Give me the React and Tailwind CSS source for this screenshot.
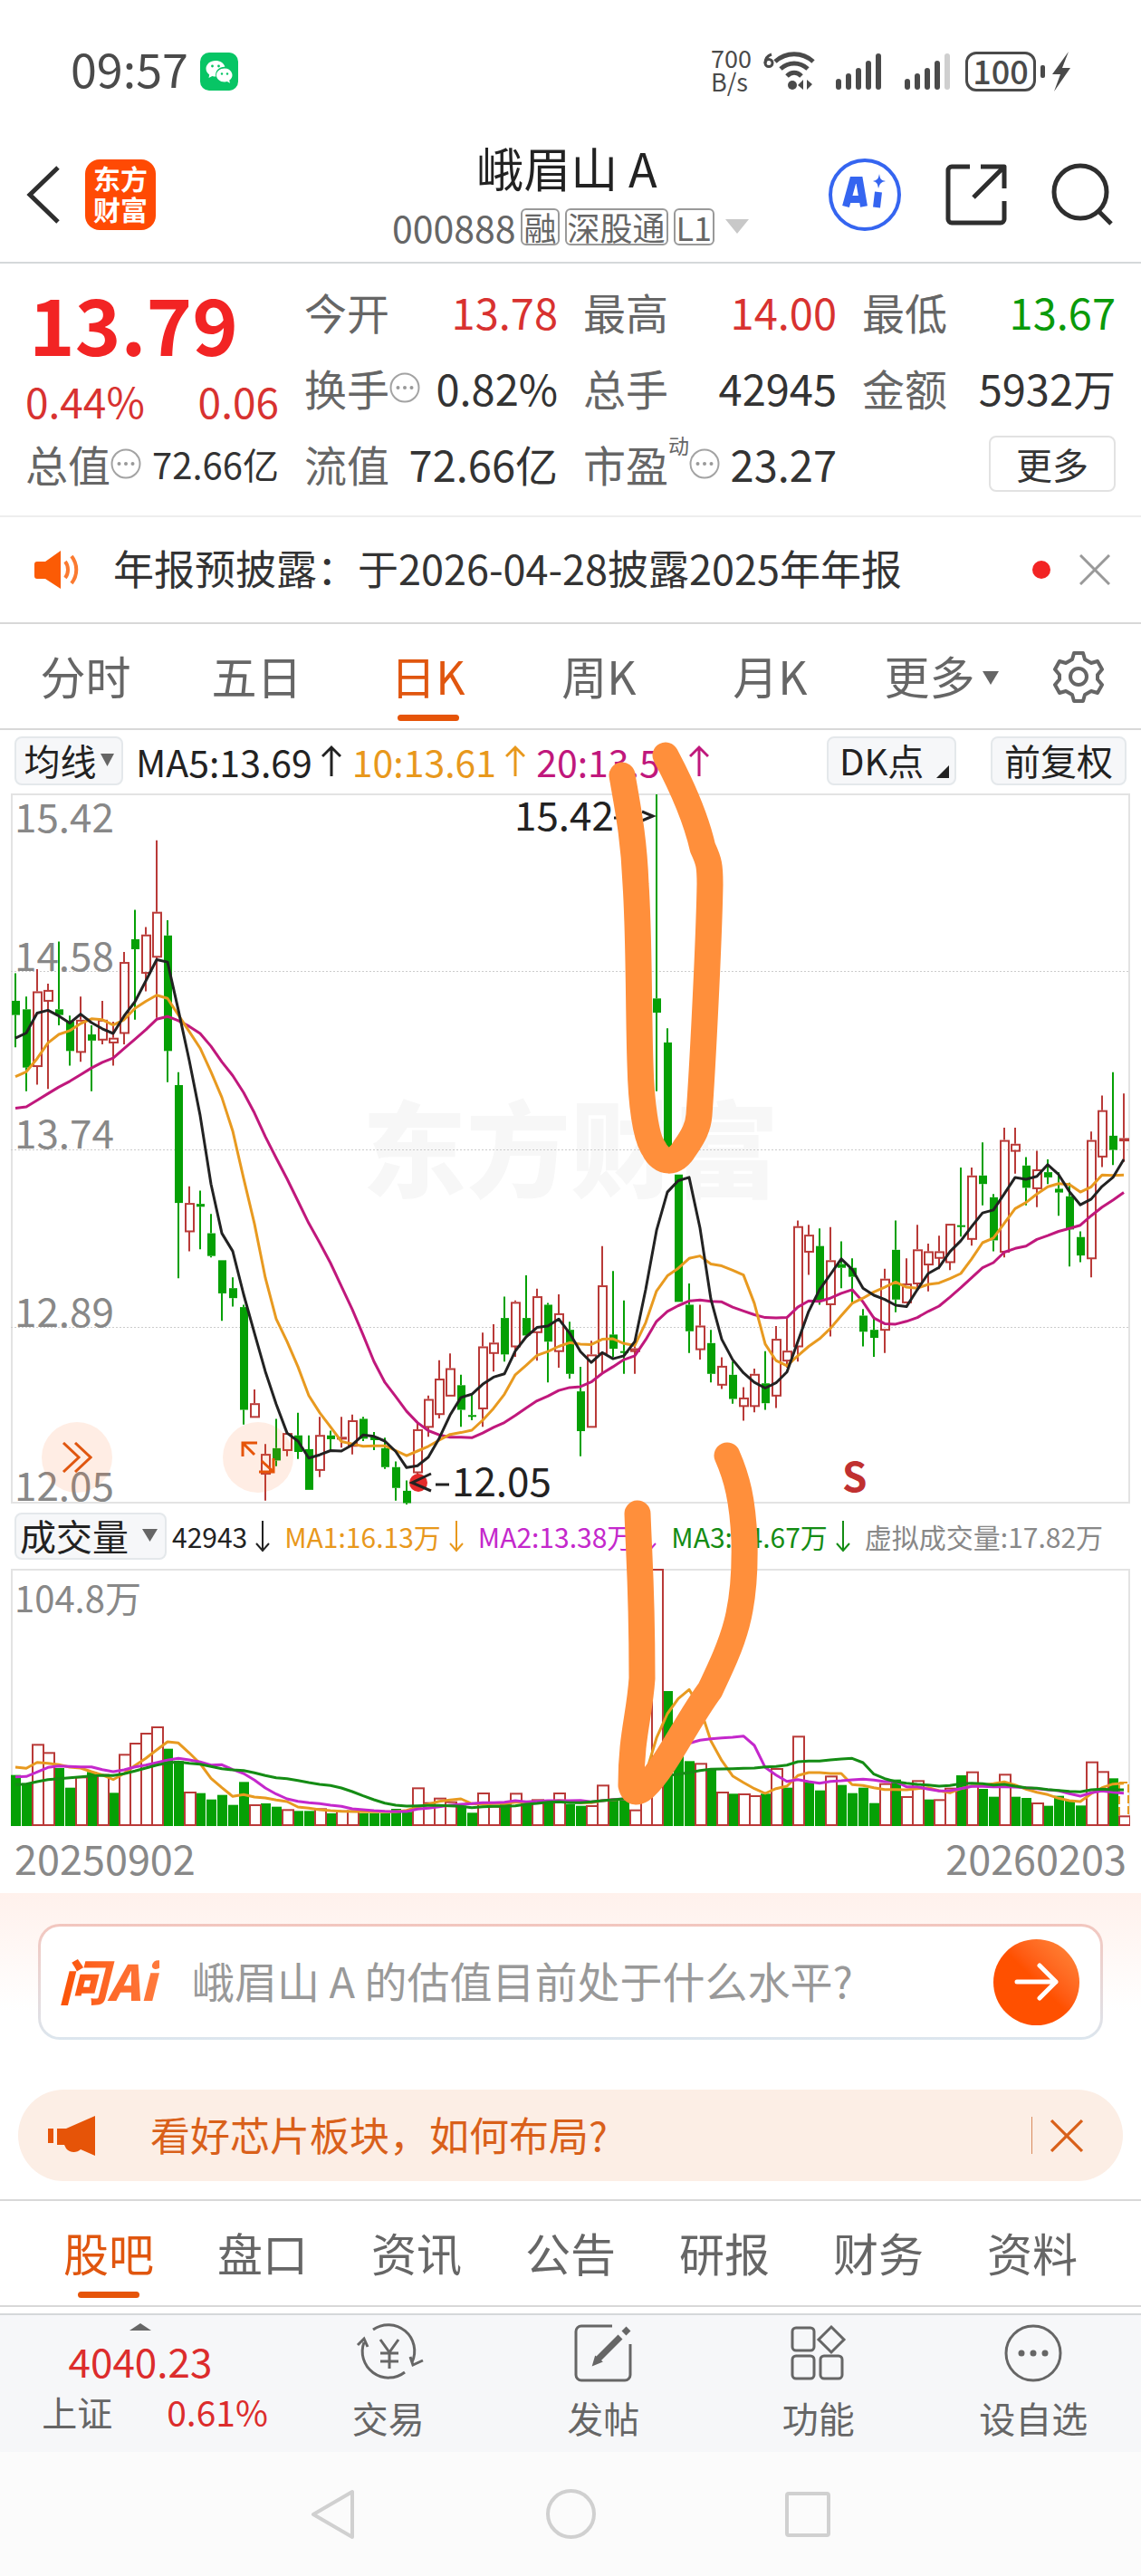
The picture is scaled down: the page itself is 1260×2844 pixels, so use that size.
import React from 'react';

const UP = '#b93a38';
const DOWN = '#05a005';

// [direction, body top, body bottom, wick top, wick bottom], levels run from 32 (top) to 1532 (bottom)
const candles = [
  ['d', 470, 500, 412, 568], ['d', 488, 611, 461, 661], ['u', 450, 608, 403, 647], ['u', 447, 470, 434, 656],
  ['d', 488, 500, 345, 522], ['d', 514, 576, 501, 607], ['u', 510, 578, 461, 599], ['d', 541, 554, 522, 661],
  ['u', 510, 552, 470, 562], ['u', 548, 558, 514, 607], ['u', 388, 538, 367, 562], ['d', 340, 361, 278, 510],
  ['u', 330, 411, 314, 450], ['u', 282, 377, 131, 506], ['d', 332, 576, 300, 642], ['d', 648, 897, 621, 1056],
  ['u', 897, 957, 862, 999], ['d', 899, 905, 871, 995], ['d', 961, 1009, 920, 1012], ['d', 1018, 1088, 1018, 1146],
  ['d', 1077, 1098, 1054, 1116], ['d', 1117, 1334, 1112, 1365], ['u', 1320, 1349, 1291, 1349], ['u', 1427, 1469, 1406, 1526],
  ['d', 1415, 1441, 1353, 1453], ['u', 1383, 1419, 1383, 1432], ['d', 1388, 1423, 1340, 1438], ['d', 1417, 1503, 1388, 1503],
  ['u', 1387, 1461, 1349, 1476], ['d', 1388, 1396, 1378, 1419], ['u', 1391, 1395, 1349, 1414], ['u', 1356, 1410, 1344, 1428],
  ['d', 1353, 1395, 1349, 1400], ['d', 1391, 1398, 1381, 1419], ['d', 1415, 1455, 1393, 1459], ['d', 1455, 1499, 1443, 1526],
  ['d', 1505, 1531, 1483, 1534], ['u', 1375, 1466, 1360, 1480], ['u', 1311, 1370, 1304, 1391], ['u', 1268, 1343, 1229, 1352],
  ['u', 1246, 1304, 1215, 1304], ['d', 1282, 1334, 1260, 1370], ['d', 1345, 1348, 1300, 1356], ['u', 1200, 1331, 1171, 1370],
  ['u', 1192, 1214, 1153, 1253], ['d', 1140, 1217, 1095, 1232], ['u', 1106, 1200, 1103, 1222], ['d', 1140, 1177, 1050, 1177],
  ['u', 1094, 1170, 1078, 1230], ['d', 1112, 1190, 1108, 1276], ['u', 1130, 1210, 1090, 1245], ['d', 1165, 1258, 1148, 1268],
  ['d', 1295, 1379, 1243, 1432], ['u', 1217, 1370, 1188, 1370], ['u', 1071, 1215, 988, 1255], ['d', 1175, 1205, 1041, 1222],
  ['d', 1210, 1213, 1103, 1258], ['u', 1204, 1210, 1185, 1258], ['u', 480, 740, 480, 740], ['d', 465, 495, 34, 661],
  ['d', 558, 790, 528, 790], ['d', 837, 1106, 837, 1106], ['d', 1112, 1168, 1067, 1214], ['u', 1156, 1206, 1112, 1228],
  ['d', 1193, 1258, 1165, 1276], ['u', 1241, 1281, 1223, 1290], ['d', 1260, 1311, 1232, 1321], ['u', 1308, 1326, 1286, 1357],
  ['u', 1258, 1326, 1247, 1339], ['d', 1278, 1320, 1210, 1334], ['u', 1184, 1304, 1157, 1330], ['u', 1209, 1230, 1137, 1245],
  ['u', 946, 1200, 934, 1232], ['u', 964, 1000, 943, 1049], ['d', 988, 1105, 951, 1112], ['u', 1018, 1111, 948, 1179],
  ['d', 1026, 1034, 978, 1077], ['d', 1034, 1053, 1014, 1108], ['d', 1135, 1169, 1121, 1200], ['d', 1165, 1182, 1137, 1222],
  ['u', 1057, 1165, 1036, 1214], ['d', 996, 1101, 934, 1128], ['u', 1067, 1107, 1014, 1107], ['u', 995, 1067, 943, 1075],
  ['u', 999, 1027, 983, 1084], ['u', 999, 1013, 966, 1037], ['u', 941, 1022, 941, 1039], ['d', 944, 947, 822, 968],
  ['u', 839, 973, 822, 987], ['d', 839, 857, 769, 902], ['d', 885, 976, 878, 999], ['u', 764, 1000, 738, 1012],
  ['u', 772, 787, 738, 835], ['d', 818, 865, 800, 902], ['u', 826, 866, 787, 906], ['d', 832, 843, 805, 857],
  ['d', 867, 875, 832, 924], ['d', 883, 953, 854, 1031], ['d', 969, 1008, 957, 1022], ['u', 764, 1014, 746, 1054],
  ['u', 701, 799, 670, 821], ['d', 755, 785, 621, 817], ['u', 760, 765, 666, 810],
];

const ma5 = [549, 538, 496, 490, 502, 517, 498, 516, 529, 539, 502, 472, 428, 383, 388, 490, 596, 712, 857, 961, 999, 1090, 1172, 1253, 1322, 1383, 1400, 1436, 1429, 1420, 1421, 1408, 1387, 1390, 1400, 1422, 1456, 1452, 1434, 1394, 1345, 1308, 1301, 1280, 1265, 1258, 1210, 1180, 1160, 1157, 1142, 1172, 1211, 1234, 1213, 1226, 1220, 1190, 1080, 955, 874, 850, 843, 950, 1100, 1185, 1228, 1256, 1276, 1288, 1277, 1254, 1190, 1126, 1080, 1048, 1015, 1037, 1077, 1092, 1101, 1113, 1116, 1080, 1046, 1033, 1000, 977, 947, 918, 912, 878, 843, 847, 841, 816, 837, 873, 901, 889, 862, 843, 805];
const ma10 = [630, 620, 592, 559, 541, 533, 518, 508, 510, 521, 510, 486, 471, 458, 465, 500, 535, 570, 620, 674, 745, 845, 941, 1055, 1142, 1190, 1243, 1304, 1340, 1370, 1401, 1406, 1411, 1410, 1410, 1420, 1431, 1421, 1411, 1398, 1386, 1382, 1377, 1356, 1331, 1301, 1260, 1240, 1219, 1211, 1200, 1192, 1195, 1196, 1185, 1184, 1194, 1198, 1150, 1083, 1051, 1035, 1014, 1009, 1026, 1030, 1039, 1049, 1109, 1195, 1230, 1241, 1220, 1200, 1184, 1162, 1135, 1109, 1098, 1085, 1075, 1064, 1075, 1077, 1069, 1066, 1057, 1046, 1015, 981, 971, 940, 909, 896, 878, 863, 856, 858, 874, 863, 838, 839, 838];
const ma20 = [697, 694, 680, 666, 652, 640, 626, 612, 600, 591, 571, 551, 531, 509, 503, 512, 524, 539, 566, 599, 628, 664, 707, 757, 802, 846, 893, 940, 981, 1024, 1073, 1122, 1176, 1232, 1276, 1306, 1337, 1361, 1378, 1387, 1392, 1392, 1393, 1383, 1371, 1361, 1346, 1330, 1315, 1305, 1293, 1287, 1285, 1275, 1257, 1243, 1228, 1220, 1186, 1147, 1126, 1114, 1104, 1102, 1105, 1106, 1117, 1125, 1133, 1139, 1140, 1139, 1117, 1104, 1105, 1098, 1088, 1080, 1106, 1140, 1152, 1153, 1147, 1139, 1126, 1115, 1096, 1076, 1055, 1034, 1023, 1001, 993, 988, 974, 966, 957, 951, 944, 924, 906, 891, 875];

// volume pane, levels run from 220 (top) to 1072 (zero)
const volumes = [903, 930, 800, 827, 880, 945, 908, 893, 900, 962, 833, 796, 763, 742, 816, 857, 958, 963, 984, 969, 1002, 926, 1000, 997, 1008, 1016, 1022, 1022, 1013, 1030, 1020, 1020, 1030, 1030, 1030, 1015, 1025, 944, 993, 978, 990, 1005, 1028, 961, 1005, 1000, 962, 1000, 983, 995, 961, 1000, 1005, 1003, 935, 985, 985, 1017, 640, 220, 625, 733, 857, 863, 884, 958, 965, 964, 970, 965, 880, 945, 773, 928, 954, 905, 936, 963, 945, 996, 930, 918, 973, 920, 984, 983, 945, 904, 891, 949, 975, 899, 975, 979, 994, 1005, 972, 985, 1004, 858, 890, 914, 1037];
const redVolumes = [2, 3, 6, 8, 10, 11, 12, 13, 16, 22, 25, 28, 30, 31, 37, 38, 39, 40, 43, 44, 46, 48, 50, 53, 54, 57, 58, 59, 63, 65, 67, 68, 70, 72, 75, 80, 82, 83, 85, 86, 88, 91, 94, 99, 100, 102];
const vol5 = [877, 881, 861, 864, 869, 877, 880, 892, 903, 918, 898, 872, 848, 820, 793, 797, 830, 865, 914, 945, 974, 968, 976, 979, 986, 991, 1009, 1013, 1018, 1021, 1023, 1024, 1025, 1025, 1025, 1025, 1020, 1010, 1000, 990, 986, 982, 998, 1000, 998, 998, 993, 993, 990, 992, 987, 990, 995, 995, 988, 985, 983, 985, 900, 780, 700, 650, 620, 680, 790, 855, 906, 928, 948, 964, 948, 940, 905, 895, 895, 898, 898, 935, 938, 945, 951, 951, 952, 948, 945, 955, 962, 948, 940, 937, 932, 926, 936, 950, 960, 968, 980, 988, 991, 965, 945, 933, 930];
const vol10 = [909, 908, 893, 878, 873, 875, 876, 876, 885, 892, 886, 876, 870, 862, 854, 848, 853, 860, 870, 869, 885, 898, 920, 946, 966, 982, 990, 995, 998, 1003, 1007, 1015, 1018, 1021, 1023, 1024, 1024, 1016, 1013, 1008, 1003, 1000, 998, 995, 995, 993, 988, 992, 990, 988, 988, 988, 987, 992, 988, 984, 982, 980, 940, 880, 840, 810, 798, 788, 783, 780, 778, 774, 805, 878, 903, 924, 918, 925, 930, 924, 922, 919, 917, 920, 925, 925, 942, 942, 950, 956, 955, 948, 941, 941, 942, 942, 943, 945, 948, 952, 955, 965, 973, 962, 956, 960, 963];
const vol20 = [935, 933, 925, 918, 915, 912, 909, 906, 904, 905, 899, 890, 880, 870, 863, 860, 864, 867, 875, 882, 886, 888, 896, 905, 912, 915, 921, 928, 934, 938, 946, 958, 972, 985, 996, 1003, 1006, 1005, 1004, 1004, 1005, 1007, 1011, 1008, 1007, 1007, 1005, 1000, 997, 993, 992, 995, 995, 992, 988, 985, 982, 980, 950, 930, 905, 900, 895, 888, 884, 883, 882, 881, 880, 876, 875, 870, 859, 857, 857, 853, 850, 848, 862, 900, 915, 925, 930, 934, 936, 940, 938, 932, 930, 932, 936, 934, 940, 945, 947, 951, 954, 957, 959, 952, 950, 952, 952];

const px = (i) => 5 + i * 12;
const py = (v) => ((v - 32) * 784) / 1500;
const vy = (v) => (v - 220) / 3;
const line = (values, y) => values.map((v, i) => `${px(i)},${y(v).toFixed(1)}`).join(' ');

const periodTabs = ['分时', '五日', '日K', '周K', '月K', '更多'];
const infoTabs = ['股吧', '盘口', '资讯', '公告', '研报', '财务', '资料'];

function Dots() {
  return (
    <svg className="h-[34px] w-[34px] shrink-0" viewBox="0 0 34 34" fill="none" stroke="#a3a3a3" strokeWidth="2">
      <circle cx="17" cy="17" r="15.5" />
      <g fill="#999" stroke="none">
        <circle cx="9.5" cy="17" r="2" />
        <circle cx="17" cy="17" r="2" />
        <circle cx="24.5" cy="17" r="2" />
      </g>
    </svg>
  );
}

function Arrow({ down, small }) {
  return (
    <svg className={small ? 'h-9 w-4 shrink-0' : 'h-9 w-[22px] shrink-0'} viewBox={small ? '3 0 16 36' : '0 0 22 36'} fill="none" stroke="currentColor" strokeWidth={small ? 2 : 3}>
      {down ? <path d="M11 1v33M4 26l7 8 7-8" /> : <path d="M11 35V3M1 13L11 3l10 10" />}
    </svg>
  );
}

function Caret({ className }) {
  return (
    <svg className={className} viewBox="0 0 16 14" preserveAspectRatio="none" fill="currentColor">
      <path d="M0 0h16L8 14z" />
    </svg>
  );
}

function Close({ className }) {
  return (
    <svg className={className} viewBox="0 0 34 34" fill="none" stroke="currentColor" strokeWidth="3">
      <path d="M1 1l32 32M33 1L1 33" />
    </svg>
  );
}

function Signal({ weak }) {
  return (
    <svg className="h-[42px] w-[52px]" viewBox="0 0 52 42" strokeWidth="6" strokeLinecap="round" stroke="#4a4a4a">
      <path d="M4 38v-6M15 38V26M26 38V20M37 38V12" />
      <path d="M48 38V4" stroke={weak ? '#cfcfcf' : '#4a4a4a'} />
    </svg>
  );
}

function StatusBar() {
  return (
    <div className="flex h-[145px] items-center pt-3 pr-[76px] pl-[78px] text-[#4a4a4a]">
      <span className="pb-2 text-[52px] leading-[50px]">09:57</span>
      <svg className="ml-[13px] h-[42px] w-[42px]" viewBox="0 0 42 42">
        <rect width="42" height="42" rx="10" fill="#07c565" />
        <path d="M17 9c-6 0-10.500 4-10.500 8.800 0 2.700 1.400 5 3.700 6.600L9.500 28l3.900-2c1.300.4 2.600.5 4 .5-1.500-6.500 4-11 10-10.800C26.300 11.700 22 9 17 9z" fill="#fff" />
        <path d="M27 17.500c-5 0-9 3.300-9 7.500s4 7.500 9 7.500c1 0 2-.1 2.900-.4l3.100 1.700-.8-3c2-1.400 3.300-3.500 3.300-5.800 0-4.200-3.700-7.500-8.500-7.500z" fill="#fff" />
        <g fill="#07c565">
          <circle cx="13.500" cy="15" r="1.400" />
          <circle cx="20.500" cy="15" r="1.400" />
          <circle cx="24" cy="23.500" r="1.200" />
          <circle cx="30" cy="23.500" r="1.200" />
        </g>
      </svg>
      <div className="ml-auto flex items-center">
        <div className="pb-1 text-[27px] leading-[26px]">
          <div>700</div>
          <div>B/s</div>
        </div>
        <svg className="ml-3 h-[44px] w-[60px]" viewBox="0 0 60 44" fill="none" stroke="#4a4a4a" strokeWidth="5">
          <path d="M10 3C4 5 3 9 3 13" strokeWidth="3" />
          <circle cx="7" cy="12.500" r="4" strokeWidth="3" />
          <path d="M14 11c12-11 30-11 42 0M20 19c9-8 21-8 30 0M27 27c5-5 11-5 16 0" />
          <circle cx="33" cy="37" r="5" fill="#4a4a4a" stroke="none" />
          <path d="M45 31v11l-6-5zM49 31v11l6-6z" fill="#4a4a4a" stroke="none" />
        </svg>
        <div className="ml-5 flex gap-6">
          <Signal />
          <Signal weak />
        </div>
        <div className="ml-4 flex h-[44px] w-[78px] items-center justify-center rounded-xl border-[3px] border-[#4a4a4a] pb-1 text-[36px] leading-[36px] font-medium">100</div>
        <svg className="ml-1 h-[44px] w-9" viewBox="0 0 36 44" fill="#4a4a4a">
          <rect x="1" y="15" width="5" height="14" rx="2" />
          <path d="M32 0L14 25h9l-7 19 18-26h-9z" />
        </svg>
      </div>
    </div>
  );
}

function Header() {
  return (
    <header className="flex h-[146px] items-center border-b-2 border-[#d5d8da] px-7">
      <div className="flex w-[338px] items-center gap-7 pb-1">
        <button aria-label="返回">
          <svg className="h-[64px] w-[38px]" viewBox="0 0 38 64" fill="none" stroke="#2e2e2e" strokeWidth="5">
            <path d="M36 2L5 32l31 30" />
          </svg>
        </button>
        <div className="grid h-[78px] w-[78px] place-items-center rounded-[16px] bg-[#ff4a04] pb-1 text-center text-[30px] leading-[34px] font-bold text-white">
          <span>东方<br />财富</span>
        </div>
      </div>
      <div className="flex flex-1 flex-col items-center pb-1">
        <h1 className="pr-2 text-[52px] leading-[70px] text-[#222]">峨眉山 A</h1>
        <div className="flex items-center gap-[6px] text-[#666]">
          <span className="text-[41px] leading-[60px]">000888</span>
          <span className="flex h-[41px] items-center rounded-md border-2 border-[#999] px-px text-[36px] leading-[36px]">融</span>
          <span className="flex h-[41px] items-center rounded-md border-2 border-[#999] px-px text-[36px] leading-[36px]">深股通</span>
          <span className="flex h-[41px] items-center rounded-md border-2 border-[#999] px-px text-[36px] leading-[36px]">L1</span>
          <Caret className="ml-[6px] h-4 w-[26px] text-[#c8c8c8]" />
        </div>
      </div>
      <div className="flex w-[338px] items-center justify-end gap-12 pr-[2px] pb-1">
        <button aria-label="AI">
          <svg className="h-[82px] w-[82px]" viewBox="0 0 82 82" fill="none" stroke="#3565f0" strokeWidth="4">
            <circle cx="41" cy="41" r="38" />
            <path d="M20 54l8-29h7l5 29M24 46h14M56 38l-2 17" strokeWidth="8" />
            <path d="M57 18c1 6 2 7 7 8-5 1-6 2-8 8-1-6-2-7-6-8 4-1 6-2 7-8z" fill="#3565f0" stroke="none" />
          </svg>
        </button>
        <button aria-label="分享">
          <svg className="h-[68px] w-[68px]" viewBox="0 0 68 68" fill="none" stroke="#2e2e2e" strokeWidth="5" strokeLinejoin="round">
            <path d="M27 3H7a4 4 0 0 0-4 4v54a4 4 0 0 0 4 4h54a4 4 0 0 0 4-4V41M39 3h26v24M65 3L31 37" />
          </svg>
        </button>
        <button aria-label="搜索">
          <svg className="h-[70px] w-[70px]" viewBox="0 0 70 70" fill="none" stroke="#2e2e2e" strokeWidth="5">
            <circle cx="33" cy="32" r="29" />
            <path d="M53 53l14 14" />
          </svg>
        </button>
      </div>
    </header>
  );
}

function Quote({ label, info, value, color = 'text-[#333]' }) {
  return (
    <div className="flex items-center text-[47px] leading-[60px] whitespace-nowrap">
      <span className="text-[#666]">{label}</span>
      {info && <Dots />}
      <span className={`ml-auto ${color}`}>{value}</span>
    </div>
  );
}

function Quotes() {
  return (
    <section className="grid auto-rows-[84px] grid-cols-4 gap-x-7 border-b-2 border-[#eee] px-7 pt-[11px] pb-[15px]">
      <div className="row-span-2 text-[#d83230]">
        <div className="h-[112px] pl-1 text-[86px] leading-[108px] font-bold text-[#f22424]">13.79</div>
        <div className="flex justify-between text-[46px] leading-[56px]">
          <span>0.44%</span>
          <span>0.06</span>
        </div>
      </div>
      <Quote label="今开" value="13.78" color="text-[#d83230]" />
      <Quote label="最高" value="14.00" color="text-[#d83230]" />
      <Quote label="最低" value="13.67" color="text-[#0a9a0a]" />
      <Quote label="换手" info value="0.82%" />
      <Quote label="总手" value="42945" />
      <Quote label="金额" value="5932万" />
      <div className="flex items-center text-[47px] leading-[60px] whitespace-nowrap">
        <span className="text-[#666]">总值</span>
        <Dots />
        <span className="ml-auto text-[40px] text-[#333]">72.66亿</span>
      </div>
      <Quote label="流值" value="72.66亿" />
      <div className="flex items-center text-[47px] leading-[60px] whitespace-nowrap">
        <span className="text-[#666]">市盈</span>
        <sup className="-mt-5 text-[23px] leading-6 text-[#666]">动</sup>
        <Dots />
        <span className="ml-auto text-[#333]">23.27</span>
      </div>
      <div className="flex items-center justify-end">
        <button className="h-[62px] w-[140px] rounded-lg border-2 border-[#e2e2e2] text-[40px] leading-[54px] text-[#333]">更多</button>
      </div>
    </section>
  );
}

function Notice() {
  return (
    <div className="flex h-[118px] items-center border-b-2 border-[#d8d8d8] pr-[34px] pl-[38px]">
      <svg className="h-[42px] w-[50px]" viewBox="0 0 50 42" fill="#fb5b05">
        <path d="M3 12h9L29 0v42L12 31H3c-2 0-3-1-3-3V15c0-2 1-3 3-3z" />
        <path d="M34 12c4 5 4 13 0 18M41 6c7 9 7 21 0 30" fill="none" stroke="#fb7a30" strokeWidth="4" />
      </svg>
      <span className="ml-[37px] pb-1 text-[45px] leading-[60px] whitespace-nowrap text-[#333]">年报预披露：于2026-04-28披露2025年年报</span>
      <span className="ml-auto h-5 w-5 rounded-full bg-[#f22424]" />
      <button aria-label="关闭" className="ml-8 text-[#999]">
        <Close className="h-[34px] w-[34px]" />
      </button>
    </div>
  );
}

function PeriodTabs() {
  return (
    <nav className="flex h-[117px] border-b-2 border-[#d8d8d8] text-[50px] leading-[72px] text-[#666]">
      <div className="grid flex-1 grid-cols-6">
        {periodTabs.map((tab) => (
          <button key={tab} className={tab === '日K' ? 'relative pb-1 text-[#e0560f]' : 'pb-1'}>
            {tab}
            {tab === '日K' && <span className="absolute bottom-2 left-1/2 h-[7px] w-[68px] -translate-x-1/2 rounded-full bg-[#e65408]" />}
            {tab === '更多' && <Caret className="mb-2 ml-2 inline h-[15px] w-[18px]" />}
          </button>
        ))}
      </div>
      <button aria-label="设置" className="grid w-[126px] place-items-center pr-3">
        <svg className="h-[58px] w-[58px]" viewBox="0 0 58 58" fill="none" stroke="#666" strokeWidth="4" strokeLinejoin="round">
          <path d="M24 3h10l2 7 7 4 7-2 5 9-5 6v5l5 6-5 9-7-2-7 4-2 7H24l-2-7-7-4-7 2-5-9 5-6v-5l-5-6 5-9 7 2 7-4z" />
          <circle cx="29" cy="29" r="9" />
        </svg>
      </button>
    </nav>
  );
}

function PriceChart() {
  return (
    <div className="relative mx-3">
      <svg className="block h-auto w-full overflow-visible font-['Noto_Sans_CJK_SC',sans-serif]" viewBox="0 0 1236 784" fontSize="44">
        <text x="388" y="437" fontSize="115" fontWeight="900" fill="#f7f7f7">东方财富</text>
        <rect x="1" y="1" width="1234" height="782" fill="none" stroke="#e3e3e3" strokeWidth="2" />
        <g stroke="#ccc" strokeDasharray="2 2">
          <path d="M0 196.500h1236M0 393.500h1236M0 589.500h1236" />
        </g>
        <g fill="#888">
          <text x="4" y="43">15.42</text>
          <text x="4" y="196">14.58</text>
          <text x="4" y="392">13.74</text>
          <text x="4" y="589">12.89</text>
          <text x="4" y="781">12.05</text>
        </g>
        {candles.map(([dir, top, bottom, high, low], i) => {
          const x = px(i);
          const color = dir === 'u' ? UP : DOWN;
          return (
            <g key={i} stroke={color} strokeWidth="2">
              <path d={`M${x} ${py(high)}V${py(top)}M${x} ${py(bottom)}V${py(low)}`} />
              {dir === 'u'
                ? <rect x={x - 4} y={py(top) + 1} width="9" height={Math.max(py(bottom) - py(top) - 1, 1)} fill="none" />
                : <rect x={x - 4} y={py(top)} width="9" height={Math.max(py(bottom) - py(top), 2)} fill={color} stroke="none" />}
            </g>
          );
        })}
        <g fill="none" strokeWidth="3" strokeLinejoin="round">
          <polyline points={line(ma20, py)} stroke="#c0187c" />
          <polyline points={line(ma10, py)} stroke="#e89a20" />
          <polyline points={line(ma5, py)} stroke="#222" />
        </g>
        <circle cx="450" cy="761" r="10" fill="#e52a2a" />
        <g fill="none" stroke="#222" strokeWidth="3">
          <path d="M666 27h10M697 20l12 5-12 5M464 751l-21 10 21 9M469 763h15" />
        </g>
        <text x="556" y="41" fill="#222">15.42</text>
        <text x="487" y="776" fill="#222">12.05</text>
        <text x="918" y="771" fontWeight="700" fill="#c03030">S</text>
      </svg>
      <button aria-label="展开" className="absolute bottom-3 left-[34px] grid h-[78px] w-[78px] place-items-center rounded-full bg-[#ff6a1a]/12">
        <svg className="h-[34px] w-[34px]" viewBox="0 0 34 34" fill="none" stroke="#e0560f" strokeWidth="3">
          <path d="M2 1l17 16L2 33M15 1l17 16-17 16" />
        </svg>
      </button>
      <button aria-label="全屏" className="absolute bottom-3 left-[234px] grid h-[78px] w-[78px] place-items-center rounded-full bg-[#ff6a1a]/12">
        <svg className="h-[38px] w-[38px]" viewBox="0 0 38 38" fill="none" stroke="#e65408" strokeWidth="3">
          <path d="M18 3H2v15M2 3l13 13M36 20v15H20M36 35L23 23" />
        </svg>
      </button>
    </div>
  );
}

function VolumeChart() {
  return (
    <div className="mx-3">
      <svg className="block h-auto w-full font-['Noto_Sans_CJK_SC',sans-serif]" viewBox="0 0 1236 284">
        <path d="M1 284V1h1234v283" fill="none" stroke="#e3e3e3" strokeWidth="2" />
        <text x="4" y="48" fontSize="40" fill="#888">104.8万</text>
        {volumes.map((v, i) =>
          redVolumes.includes(i) ? null : (
            <rect key={i} x={px(i) - 5} y={vy(v)} width="11" height={284 - vy(v)} fill={DOWN} />
          ),
        )}
        {redVolumes.map((i) => (
          <rect key={i} x={px(i) - 5} y={vy(volumes[i]) + 1} width="12" height={282 - vy(volumes[i])} fill="#fff" stroke={UP} strokeWidth="2" />
        ))}
        <path d="M1224 272V236h10v36" fill="none" stroke="#e89a20" strokeWidth="2" strokeDasharray="9 3" />
        <g fill="none" strokeWidth="3" strokeLinejoin="round">
          <polyline points={line(vol5, vy)} stroke="#e89a20" />
          <polyline points={line(vol10, vy)} stroke="#c428cc" />
          <polyline points={line(vol20, vy)} stroke="#148c14" />
        </g>
      </svg>
    </div>
  );
}

const chip = 'flex items-center rounded-lg border-2 border-[#e4e8eb] bg-[#f6f7f9] pb-[2px] text-[40px] leading-[46px] text-[#222]';

function Charts() {
  return (
    <section className="relative">
      <div className="flex h-[70px] items-center px-4 pb-[2px] text-[41px] leading-[48px] whitespace-nowrap">
        <button className={`${chip} h-[54px] w-[120px] justify-center gap-1`}>
          均线
          <Caret className="h-[14px] w-[15px] text-[#666]" />
        </button>
        <div className="ml-[14px] flex items-center gap-[10px] text-[#222]">MA5:13.69 <Arrow /></div>
        <div className="ml-3 flex items-center gap-[10px] text-[#e8981c]">10:13.61 <Arrow /></div>
        <div className="ml-3 flex items-center gap-[10px] text-[#c0187c]">20:13.53 <Arrow /></div>
        <button className={`${chip} relative ml-auto h-[54px] w-[143px] pl-[12px]`}>
          DK点
          <svg className="absolute right-[6px] bottom-[6px] h-[14px] w-[14px]" viewBox="0 0 14 14" fill="#222">
            <path d="M14 0v14H0z" />
          </svg>
        </button>
        <button className={`${chip} ml-[38px] h-[54px] w-[150px] justify-center`}>前复权</button>
      </div>
      <PriceChart />
      <div className="flex h-[72px] items-center px-4 text-[30px] leading-[48px] whitespace-nowrap">
        <button className={`${chip} h-[52px] w-[168px] justify-between pr-2 pl-1`}>
          成交量
          <Caret className="h-[14px] w-[17px] text-[#666]" />
        </button>
        <div className="ml-[6px] flex items-center gap-[9px] text-[#222]">42943 <Arrow down small /></div>
        <div className="ml-4 flex items-center gap-[9px] text-[#e8981c]">MA1:16.13万 <Arrow down small /></div>
        <div className="ml-4 flex items-center gap-[9px] text-[#c428cc]">MA2:13.38万 <Arrow down small /></div>
        <div className="ml-4 flex items-center gap-[9px] text-[#148c14]">MA3:14.67万 <Arrow down small /></div>
        <div className="ml-4 text-[#888]">虚拟成交量:17.82万</div>
      </div>
      <VolumeChart />
      <div className="flex h-[74px] items-center justify-between px-4 pb-1 text-[45px] leading-[60px] text-[#888]">
        <span>20250902</span>
        <span>20260203</span>
      </div>
      {/* hand drawn marks */}
      <svg className="pointer-events-none absolute top-0 left-0 h-auto w-full" viewBox="0 0 1260 1211" fill="none" stroke="#ff8f3b" strokeWidth="29" strokeLinecap="round" strokeLinejoin="round">
        <path d="M687 50C694 90 700 120 702 170C706 230 705 310 707 368C708 410 713 450 722 462C730 479 746 480 756 462C766 448 771 438 772 425C776 370 783 230 784 170C784 150 783 145 776 130C768 95 752 60 735 28" />
        <path d="M704 865C706 920 709 950 709 1047C706 1090 697 1110 697 1165Q700 1178 712 1167C735 1145 760 1092 784 1060C810 1005 824 975 822 894C820 850 814 826 803 801" />
      </svg>
    </section>
  );
}

function AskAi() {
  return (
    <section className="bg-linear-to-b from-[#fff1ec] to-white to-60% px-[42px] pt-[34px] pb-[55px]">
      <div className="rounded-[24px] bg-linear-to-b from-[#f2c6be] to-[#dce6ee] p-[3px]">
        <form className="flex h-[122px] items-center rounded-[21px] bg-white pr-[23px] pl-[20px]" onSubmit={(e) => e.preventDefault()}>
          <label htmlFor="ask" className="bg-linear-to-r from-[#fb5200] to-[#ff7a3c] bg-clip-text pr-1 pb-1 text-[54px] leading-[60px] font-black text-transparent italic">问Ai</label>
          <input id="ask" className="ml-9 min-w-0 flex-1 pb-1 text-[47px] leading-[60px] outline-none placeholder:text-[#999]" placeholder="峨眉山 A 的估值目前处于什么水平?" />
          <button aria-label="提问" className="grid h-[95px] w-[95px] place-items-center rounded-full bg-linear-to-tr from-[#ff5000] from-50% to-[#ff8a3c]">
            <svg className="h-[42px] w-[50px]" viewBox="0 0 50 42" fill="none" stroke="#fff" strokeWidth="5" strokeLinecap="round" strokeLinejoin="round">
              <path d="M3 21h43M28 3l18 18-18 18" />
            </svg>
          </button>
        </form>
      </div>
    </section>
  );
}

function Banner() {
  return (
    <div className="mx-5 mb-5 flex h-[101px] items-center rounded-full bg-[#fceee5] pr-[44px] pl-[33px] text-[#d9601a]">
      <svg className="h-[44px] w-[52px]" viewBox="0 0 52 44" fill="#e65408">
        <path d="M0 14h6v16H0zM10 14h10L52 0v44l-16-7c-4 4-12 4-16-1l-2-4h-8z" />
      </svg>
      <span className="ml-[61px] pb-1 text-[44px] leading-[60px]">看好芯片板块，如何布局?</span>
      <span className="ml-auto h-[41px] w-px bg-[#d98a5c]" />
      <button aria-label="关闭" className="ml-5">
        <Close className="h-9 w-9" />
      </button>
    </div>
  );
}

function InfoTabs() {
  return (
    <nav className="grid h-[119px] grid-cols-7 border-y-2 border-[#d8d8d8] px-[35px] text-[50px] leading-[72px] text-[#666]">
      {infoTabs.map((tab, i) => (
        <button key={tab} className={i === 0 ? 'relative pb-1 text-[#e0560f]' : 'pb-1'}>
          {tab}
          {i === 0 && <span className="absolute bottom-2 left-1/2 h-[7px] w-[68px] -translate-x-1/2 rounded-full bg-[#e65408]" />}
        </button>
      ))}
    </nav>
  );
}

const actions = [
  {
    label: '交易',
    icon: (
      <>
        <path d="M17 8A29 29 0 0 1 60 44M52 55A29 29 0 0 1 7 22M0 25l7-7 4 9M72 42l-11 5-3-9" />
        <path d="M25 19l10 14 10-14M35 33v18M25 34h20M25 43h20" />
      </>
    ),
  },
  {
    label: '发帖',
    icon: (
      <>
        <path d="M44 4H10a6 6 0 0 0-6 6v48a6 6 0 0 0 6 6h48a6 6 0 0 0 6-6V24" />
        <path d="M28 41l25-25M57 12l5-5" strokeWidth="7" />
        <path d="M24 46l2-7 5 4z" fill="#666" />
      </>
    ),
  },
  {
    label: '功能',
    icon: (
      <>
        <rect x="5" y="6" width="24" height="25" rx="4" />
        <rect x="5" y="37" width="24" height="25" rx="4" />
        <rect x="36" y="37" width="24" height="25" rx="4" />
        <path d="M48 5l14 14-14 14-14-14z" />
      </>
    ),
  },
  {
    label: '设自选',
    icon: (
      <>
        <circle cx="34" cy="34" r="30" />
        <g fill="#666" stroke="none">
          <circle cx="21" cy="34" r="3.500" />
          <circle cx="34" cy="34" r="3.500" />
          <circle cx="47" cy="34" r="3.500" />
        </g>
      </>
    ),
  },
];

function BottomBar() {
  return (
    <div className="mt-[7px] flex h-[153px] border-t-2 border-[#d5d8da] bg-[#f6f7f9] text-[#666]">
      <div className="flex w-[310px] flex-col items-center pt-[9px]">
        <Caret className="h-2 w-6 rotate-180" />
        <span className="mt-1 text-[44px] leading-[58px] text-[#dc2c2c]">4040.23</span>
        <div className="flex items-center gap-[60px] pl-8 text-[39px] leading-[54px]">
          上证 <span className="text-[#dc2c2c]">0.61%</span>
        </div>
      </div>
      {actions.map((a) => (
        <button key={a.label} className="flex flex-1 flex-col items-center pt-[8px]">
          <svg className="h-[68px] w-[72px] overflow-visible" viewBox="-2 0 72 68" fill="none" stroke="#666" strokeWidth="3">{a.icon}</svg>
          <span className="mt-[10px] text-[40px] leading-[54px]">{a.label}</span>
        </button>
      ))}
    </div>
  );
}

function SystemNav() {
  return (
    <div className="flex h-[137px] items-center justify-center bg-[#fbfbfb]">
      <button aria-label="后退" className="grid w-[262px] place-items-center">
        <svg className="h-[56px] w-[50px]" viewBox="0 0 50 56" fill="none" stroke="#d0d0d0" strokeWidth="4" strokeLinejoin="round">
          <path d="M46 3v50L3 28z" />
        </svg>
      </button>
      <button aria-label="主页" className="grid w-[262px] place-items-center">
        <span className="h-[55px] w-[55px] rounded-full border-4 border-[#d0d0d0]" />
      </button>
      <button aria-label="最近" className="grid w-[262px] place-items-center">
        <span className="h-[50px] w-[50px] rounded-[4px] border-4 border-[#d0d0d0]" />
      </button>
    </div>
  );
}

export default function App() {
  return (
    <main className="bg-white font-['Noto_Sans_CJK_SC',sans-serif]">
      <StatusBar />
      <Header />
      <Quotes />
      <Notice />
      <PeriodTabs />
      <Charts />
      <AskAi />
      <Banner />
      <InfoTabs />
      <BottomBar />
      <SystemNav />
    </main>
  );
}
